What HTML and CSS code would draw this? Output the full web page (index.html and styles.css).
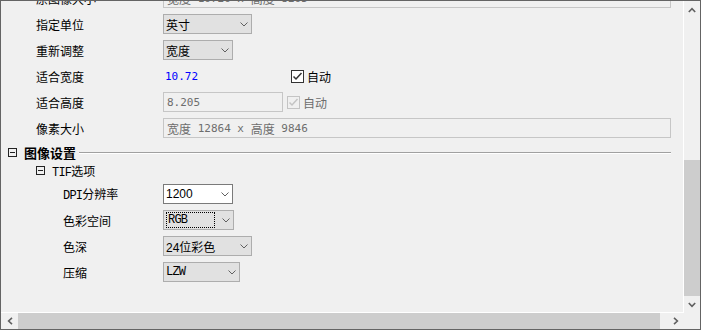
FILE: index.html
```html
<!DOCTYPE html>
<html lang="zh-CN">

<head>
  <meta charset="UTF-8">
  <title>导出设置</title>
  <link rel="stylesheet" href="styles.css">
</head>

<body>
  <div class="window">
    <div class="viewport">
      <div class="sheet">
        <!-- 尺寸 -->
        <div class="row">
          <span class="label">原图像大小</span>
          <div class="input wide"><span>宽度</span><span class="mono">&nbsp;10720 x </span><span>高度</span><span class="mono">&nbsp;8205</span></div>
        </div>
        <div class="row">
          <span class="label">指定单位</span>
          <div class="select w89"><span>英寸</span><svg class="chev" width="8" height="5" viewBox="0 0 8 5"><polyline points="0.5,0.5 4,4 7.5,0.5" /></svg></div>
        </div>
        <div class="row">
          <span class="label">重新调整</span>
          <div class="select w70"><span>宽度</span><svg class="chev" width="8" height="5" viewBox="0 0 8 5"><polyline points="0.5,0.5 4,4 7.5,0.5" /></svg></div>
        </div>
        <div class="row">
          <span class="label">适合宽度</span>
          <span class="value mono">10.72</span>
          <label class="check">
            <svg width="13" height="13" viewBox="0 0 13 13"><rect x="0.5" y="0.5" width="12" height="12" fill="#fff" stroke="#333" /><polyline points="2.5,6.5 5,9 10.5,3" fill="none" stroke="#333" stroke-width="1.5" /></svg>
            <span>自动</span>
          </label>
        </div>
        <div class="row">
          <span class="label">适合高度</span>
          <div class="input w120"><span class="mono">8.205</span></div>
          <label class="check disabled">
            <svg width="13" height="13" viewBox="0 0 13 13"><rect x="0.5" y="0.5" width="12" height="12" fill="#f0f0f0" stroke="#c4c4c4" /><polyline points="2.5,6.5 5,9 10.5,3" fill="none" stroke="#c4c4c4" stroke-width="1.5" /></svg>
            <span>自动</span>
          </label>
        </div>
        <div class="row">
          <span class="label">像素大小</span>
          <div class="input wide"><span>宽度</span><span class="mono">&nbsp;12864 x </span><span>高度</span><span class="mono">&nbsp;9846</span></div>
        </div>

        <!-- 图像设置 -->
        <div class="group">
          <svg class="toggle" width="9" height="9" viewBox="0 0 9 9"><rect x="0.5" y="0.5" width="8" height="8" fill="none" stroke="#222" /><line x1="2" y1="4.5" x2="7" y2="4.5" stroke="#222" /></svg>
          <span class="group-title">图像设置</span>
          <span class="rule"></span>
        </div>
        <div class="subgroup">
          <svg class="toggle" width="9" height="9" viewBox="0 0 9 9"><rect x="0.5" y="0.5" width="8" height="8" fill="none" stroke="#222" /><line x1="2" y1="4.5" x2="7" y2="4.5" stroke="#222" /></svg>
          <span><span class="latin">TIF</span>选项</span>
        </div>
        <div class="row sub">
          <span class="label"><span class="latin">DPI</span>分辨率</span>
          <div class="select edit w70"><span class="sans">1200</span><svg class="chev" width="8" height="5" viewBox="0 0 8 5"><polyline points="0.5,0.5 4,4 7.5,0.5" /></svg></div>
        </div>
        <div class="row sub">
          <span class="label">色彩空间</span>
          <div class="select w71"><span class="focus latin">RGB</span><svg class="chev" width="8" height="5" viewBox="0 0 8 5"><polyline points="0.5,0.5 4,4 7.5,0.5" /></svg></div>
        </div>
        <div class="row sub">
          <span class="label">色深</span>
          <div class="select w89"><span class="sans">24位彩色</span><svg class="chev" width="8" height="5" viewBox="0 0 8 5"><polyline points="0.5,0.5 4,4 7.5,0.5" /></svg></div>
        </div>
        <div class="row sub">
          <span class="label">压缩</span>
          <div class="select w77"><span class="latin">LZW</span><svg class="chev" width="8" height="5" viewBox="0 0 8 5"><polyline points="0.5,0.5 4,4 7.5,0.5" /></svg></div>
        </div>
      </div>
    </div>

    <!-- 滚动条 -->
    <div class="vscroll">
      <div class="arrow"><svg width="8" height="6" viewBox="0 0 8 6"><polyline points="0.8,5 4,1.6 7.2,5" /></svg></div>
      <div class="track"><div class="thumb"></div></div>
      <div class="arrow"><svg width="8" height="6" viewBox="0 0 8 6"><polyline points="0.8,1 4,4.4 7.2,1" /></svg></div>
    </div>
    <div class="hscroll">
      <div class="arrow"><svg width="6" height="8" viewBox="0 0 6 8"><polyline points="5,0.8 1.6,4 5,7.2" /></svg></div>
      <div class="track"><div class="thumb"></div></div>
      <div class="arrow"><svg width="6" height="8" viewBox="0 0 6 8"><polyline points="1,0.8 4.4,4 1,7.2" /></svg></div>
    </div>
    <div class="corner"></div>
  </div>
</body>

</html>
```

FILE: styles.css
```css
:root {
  --bg: #f0f0f0;
  --frame: #646464;
  --btn: #e1e1e1;
  --btn-border: #adadad;
  --disabled: #6d6d6d;
  --arrow: #606060;
  --thumb: #cdcdcd;
}

body {
  margin: 0;
  background: var(--bg);
  font-family: "Noto Sans CJK SC", sans-serif;
  font-size: 12px;
  color: #000;
}

.window {
  width: 701px;
  height: 330px;
  box-sizing: border-box;
  border: 1px solid var(--frame);
  display: grid;
  grid-template-columns: 683px 16px;
  grid-template-rows: 312px 16px;
  background: var(--bg);
}

.viewport {
  overflow: hidden;
  border-right: 1px solid #fff;
  border-bottom: 1px solid #fff;
}

.sheet {
  margin-top: -16px;
}

.row {
  display: flex;
  align-items: center;
  height: 26px;
  padding: 0 12px 0 35px;
  white-space: nowrap;
}

.row .label {
  width: 127px;
  flex: none;
}

.row.sub {
  padding-left: 62px;
}

.row.sub .label {
  width: 100px;
}

.mono {
  font-family: "DejaVu Sans Mono", monospace;
  font-size: 11px;
}

.latin {
  font-family: "Liberation Mono", monospace;
  font-size: 12px;
  letter-spacing: -0.8px;
}

.sans {
  font-family: "Liberation Sans", "Noto Sans CJK SC", sans-serif;
}

/* 下拉框 */
.select {
  height: 20px;
  box-sizing: border-box;
  border: 1px solid var(--btn-border);
  background: var(--btn);
  display: flex;
  align-items: center;
  justify-content: space-between;
  padding: 0 3px 0 2px;
  flex: none;
}

.select.edit {
  background: #fff;
  border-color: #7a7a7a;
}

.chev polyline {
  fill: none;
  stroke: var(--arrow);
  stroke-width: 1;
}

.w70 { width: 70px; }
.w71 { width: 71px; }
.w77 { width: 77px; }
.w89 { width: 89px; }
.w120 { width: 120px; }

.focus {
  border: 1px dotted #000;
  height: 16px;
  box-sizing: border-box;
  width: 49px;
  line-height: 14px;
  padding-left: 1px;
}

/* 文本框 */
.input {
  height: 20px;
  box-sizing: border-box;
  border: 1px solid #c6c6c6;
  background: var(--bg);
  color: var(--disabled);
  display: flex;
  align-items: center;
  padding: 0 3px;
  white-space: pre;
  flex: none;
}

.input.wide {
  flex: 1;
}

.value {
  width: 122px;
  padding-left: 2px;
  color: #0000ff;
  flex: none;
}

.check {
  display: flex;
  align-items: center;
  gap: 3px;
  margin-left: 4px;
}

.check.disabled {
  color: var(--disabled);
}

/* 分组 */
.group {
  display: flex;
  align-items: center;
  height: 23px;
  padding: 0 12px 0 7px;
}

.group-title {
  margin-left: 7px;
  font-weight: bold;
  font-size: 13px;
}

.rule {
  flex: 1;
  margin-left: 3px;
  border-top: 1px solid #a0a0a0;
  border-bottom: 1px solid #fff;
}

.subgroup {
  display: flex;
  align-items: center;
  gap: 7px;
  height: 17px;
  box-sizing: border-box;
  padding: 0 0 4px 35px;
}

.toggle {
  flex: none;
}

/* 滚动条 */
.vscroll {
  display: flex;
  flex-direction: column;
}

.vscroll .arrow {
  height: 17px;
  display: flex;
  align-items: center;
  justify-content: center;
}

.vscroll .track {
  flex: 1;
  display: flex;
  flex-direction: column;
  justify-content: flex-end;
}

.vscroll .thumb {
  height: 136px;
  background: var(--thumb);
}

.hscroll {
  display: flex;
}

.hscroll .arrow {
  width: 17px;
  display: flex;
  align-items: center;
  justify-content: center;
}

.hscroll .track {
  flex: 1;
}

.hscroll .thumb {
  width: 642px;
  height: 100%;
  background: var(--thumb);
}

.arrow polyline {
  fill: none;
  stroke: var(--arrow);
  stroke-width: 1.6;
}

.corner {
  background: var(--bg);
}
```
